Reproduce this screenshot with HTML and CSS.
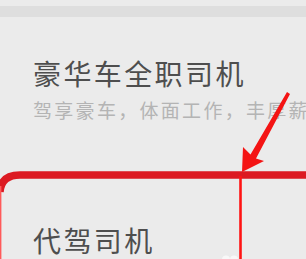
FILE: index.html
```html
<!DOCTYPE html>
<html lang="zh-CN">
<head>
  <meta charset="UTF-8">
  <title>司机招聘</title>
  <link rel="stylesheet" href="styles.css">
</head>
<body>
  <div class="band"></div>

  <div class="job-list">
    <div class="job">
      <h2 class="job-title">豪华车全职司机</h2>
      <p class="job-desc">驾享豪车，体面工作，丰厚薪资</p>
    </div>
    <div class="job">
      <h2 class="job-title">代驾司机</h2>
    </div>
  </div>

  <!-- red annotation drawn over the screenshot -->
  <svg class="mark" width="306" height="259" viewBox="0 0 306 259">
    <path d="M0 192 Q1 175 20 175 H306" fill="none" stroke="#dc1a22" stroke-width="7.5"/>
    <line x1="0.7" y1="186" x2="0.7" y2="259" stroke="#ff5a5a" stroke-width="1.4"/>
    <line x1="240.5" y1="176" x2="240.5" y2="259" stroke="#ff1414" stroke-width="2.6"/>
    <polygon points="242,172 243,147 250.5,154.5 287,92 290,94 256,158.5 264,161" fill="#f41414"/>
    <circle cx="226" cy="259.5" r="4" fill="#f8f8f8"/>
    <circle cx="234" cy="259.5" r="4" fill="#f8f8f8"/>
  </svg>
</body>
</html>
```

FILE: styles.css
```css
body {
  margin: 0;
  background: #ebebeb;
  font-family: "Noto Sans CJK SC", "Noto Sans", sans-serif;
  position: relative;
  overflow: hidden;
  height: 259px;
}
.band {
  height: 11px;
  margin-top: 6px;
  background: #dedede;
}
.job-list { margin-top: 39px; }
.job {
  padding: 0 0 50px 33px;
}
.job + .job { padding: 51px 0 0 33px; }
.job-title {
  margin: 0;
  font-size: 28px;
  font-weight: normal;
  line-height: 34px;
  letter-spacing: 2.4px;
  color: #4e4e4e;
}
.job-desc {
  margin: 8px 0 0;
  font-size: 19px;
  line-height: 24px;
  letter-spacing: 2.3px;
  color: #b4b4b4;
  white-space: nowrap;
  overflow: hidden;
}
.mark {
  position: absolute;
  top: 0;
  left: 0;
  pointer-events: none;
}
```
